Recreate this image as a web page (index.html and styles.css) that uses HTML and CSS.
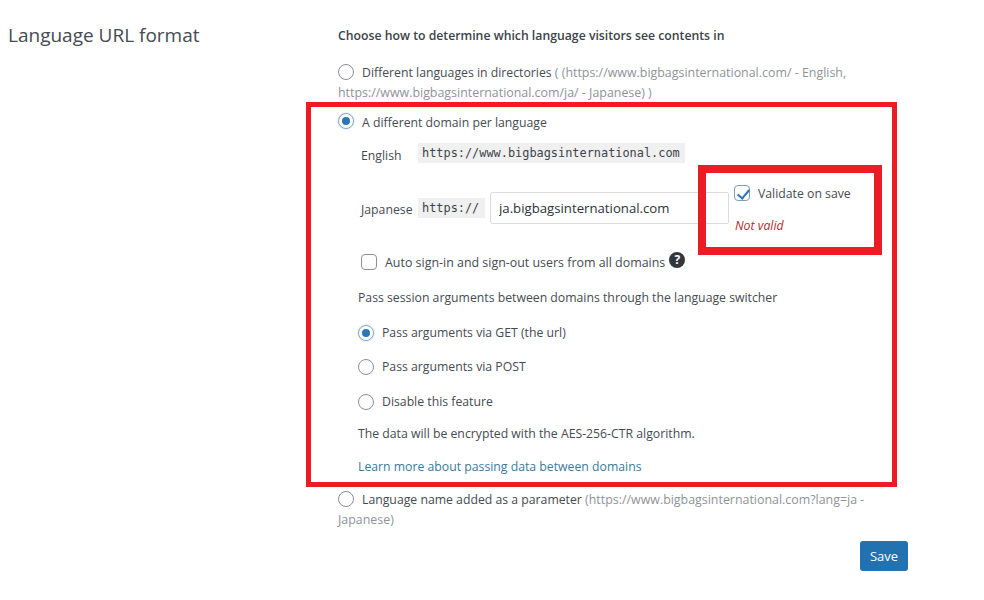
FILE: index.html
```html
<!DOCTYPE html>
<html lang="en">
<head>
<meta charset="utf-8">
<title>Language URL format</title>
<link rel="stylesheet" href="styles.css">
</head>
<body>
<main class="page">
  <h2 class="section-title">Language URL format</h2>
  <form class="options">
    <p class="lead">Choose how to determine which language visitors see contents in</p>

    <label class="option option-dirs"><input class="radio" type="radio" name="fmt"><span class="opt-label">Different languages in directories</span> <span class="muted">( (https://www.bigbagsinternational.com/ - English, https://www.bigbagsinternational.com/ja/ - Japanese) )</span></label>

    <label class="option option-domain"><input class="radio" type="radio" name="fmt" checked><span class="opt-label">A different domain per language</span></label>

    <div class="domain-row row-english">
      <span class="lang lang-en">English</span>
      <code class="code">https://www.bigbagsinternational.com</code>
    </div>

    <div class="domain-row row-japanese">
      <span class="lang lang-ja">Japanese</span>
      <code class="code">https://</code>
      <input class="domain-input" type="text" value="ja.bigbagsinternational.com">
      <div class="validate">
        <label class="validate-label"><input class="check" type="checkbox" checked><span class="nudge">Validate on save</span></label>
        <em class="not-valid">Not valid</em>
      </div>
    </div>

    <label class="auto-row"><input class="check" type="checkbox"><span class="nudge">Auto sign-in and sign-out users from all domains</span><span class="help">?</span></label>

    <div class="session">
      <p class="session-lead">Pass session arguments between domains through the language switcher</p>
      <label class="sub-option"><input class="radio" type="radio" name="pass" checked><span>Pass arguments via GET (the url)</span></label>
      <label class="sub-option"><input class="radio" type="radio" name="pass"><span>Pass arguments via POST</span></label>
      <label class="sub-option"><input class="radio" type="radio" name="pass"><span>Disable this feature</span></label>
      <p class="session-note">The data will be encrypted with the AES-256-CTR algorithm.</p>
      <a class="learn" href="#">Learn more about passing data between domains</a>
    </div>

    <label class="option option-param"><input class="radio" type="radio" name="fmt"><span class="opt-label">Language name added as a parameter</span> <span class="muted">(https://www.bigbagsinternational.com?lang=ja - Japanese)</span></label>

    <div class="actions"><button class="save" type="button">Save</button></div>
  </form>
</main>
<div class="mark mark-outer"></div>
<div class="mark mark-inner"></div>
</body>
</html>
```

FILE: styles.css
```css
* { box-sizing: border-box; }
html, body { margin: 0; height: 600px; overflow: hidden; background: #fff; }
body {
  font-family: "Open Sans", "Noto Sans", sans-serif;
  font-size: 12.25px;
  line-height: 20px;
  color: #454b52;
  position: relative;
}
p { margin: 0; }
.page { display: flex; align-items: flex-start; padding-top: 25px; }
.section-title {
  flex: 0 0 338px;
  margin: 0;
  padding-left: 8px;
  font-size: 19px;
  font-weight: 400;
  line-height: 20px;
  color: #454b52;
}
.options { width: 570px; display: flex; flex-direction: column; }
.lead { font-weight: 600; color: #3c434a; padding-top: 1px; }

.radio, .check {
  appearance: none;
  -webkit-appearance: none;
  width: 16px;
  height: 16px;
  margin: 0;
  border: 1px solid #8c8f94;
  background: #fff;
  flex: none;
  display: inline-block;
  position: relative;
}
.radio { border-radius: 50%; }
.radio:checked { box-shadow: 0 0 0 1px #e4eef5; border-color: #8aa9c0; }
.radio:checked::before {
  content: "";
  position: absolute;
  left: 3px;
  top: 3px;
  width: 8px;
  height: 8px;
  border-radius: 50%;
  background: #2d76b5;
}
.check { border-radius: 4px; }
.check:checked { border-color: #7f9db5; }
.check:checked::before {
  content: "";
  position: absolute;
  left: 4.5px;
  top: 0.5px;
  width: 5px;
  height: 10px;
  border: solid #2d76b5;
  border-width: 0 2.5px 2.5px 0;
  transform: rotate(40deg);
}

.option { display: block; }
.option .radio { vertical-align: -3px; margin-right: 8px; }
.muted { color: #8f9399; font-size: 12.42px; }
.option-dirs { margin-top: 17px; }
.option-domain { margin-top: 10px; }
.option-domain .radio { vertical-align: -2px; }

.domain-row { display: flex; align-items: center; padding-left: 23px; }
.lang { line-height: 20px; }
.lang-en { width: 57px; align-self: flex-start; margin: 3px 0 -3px; }
.lang-ja { width: 57px; margin-top: 4px; }
.code {
  font-family: "DejaVu Sans Mono", "Liberation Mono", monospace;
  font-size: 11.9px;
  line-height: 21px;
  height: 20px;
  padding: 0 4px;
  background: #f0f0f1;
  color: #3c434a;
}
.row-english { margin-top: 10px; }
.row-english .code { width: 267px; white-space: nowrap; }
.row-japanese { margin-top: 29px; height: 32px; }
.row-japanese .code { width: 67px; }
.domain-input {
  width: 239px;
  height: 32px;
  margin-left: 5px;
  padding: 0 8px;
  border: 1px solid #dcdcde;
  border-radius: 2px;
  font: 13.2px/20px "Open Sans", "Noto Sans", sans-serif;
  color: #2c3338;
  background: #fff;
}
.validate {
  margin-left: 5px;
  align-self: flex-start;
  margin-top: -8px;
  display: flex;
  flex-direction: column;
  height: 56px;
}
.validate-label { display: flex; align-items: center; gap: 8px; height: 18px; }
.nudge { padding-top: 2px; }
.not-valid { margin-top: 14px; margin-left: 1px; color: #b32d2e; font-size: 12.25px; }

.auto-row { display: flex; align-items: center; padding-left: 23px; gap: 8px; margin-top: 30px; height: 16px; font-size: 12.43px; }
.help {
  width: 16px;
  height: 16px;
  border-radius: 50%;
  background: #32373c;
  color: #fff;
  font-size: 12px;
  font-weight: 700;
  line-height: 16px;
  text-align: center;
  margin: -4px 0 0 -4px;
}

.session { padding-left: 20px; display: flex; flex-direction: column; }
.session-lead { margin-top: 18px; }
.sub-option { display: flex; align-items: center; gap: 8px; height: 20px; }
.session-lead + .sub-option { margin-top: 15px; }
.sub-option + .sub-option { margin-top: 14px; }
.sub-option + .sub-option + .sub-option { margin-top: 15px; }
.session-note { margin-top: 12px; }
.learn { margin-top: 13px; color: #3a7a9c; text-decoration: none; }

.option-param { margin-top: 13px; padding-right: 20px; }
.actions { display: flex; justify-content: flex-end; margin-top: 11px; }
.save {
  width: 48px;
  height: 30px;
  border: 0;
  border-radius: 3px;
  background: #2271b1;
  color: #fff;
  font: 13px/20px "Open Sans", "Noto Sans", sans-serif;
  padding: 0;
}

.mark { position: absolute; border-style: solid; border-color: #ed1c24; pointer-events: none; }
.mark-outer { left: 306px; top: 102px; width: 591px; height: 385px; border-width: 5px; }
.mark-inner { left: 698px; top: 165px; width: 184px; height: 90px; border-width: 8px; }
```
